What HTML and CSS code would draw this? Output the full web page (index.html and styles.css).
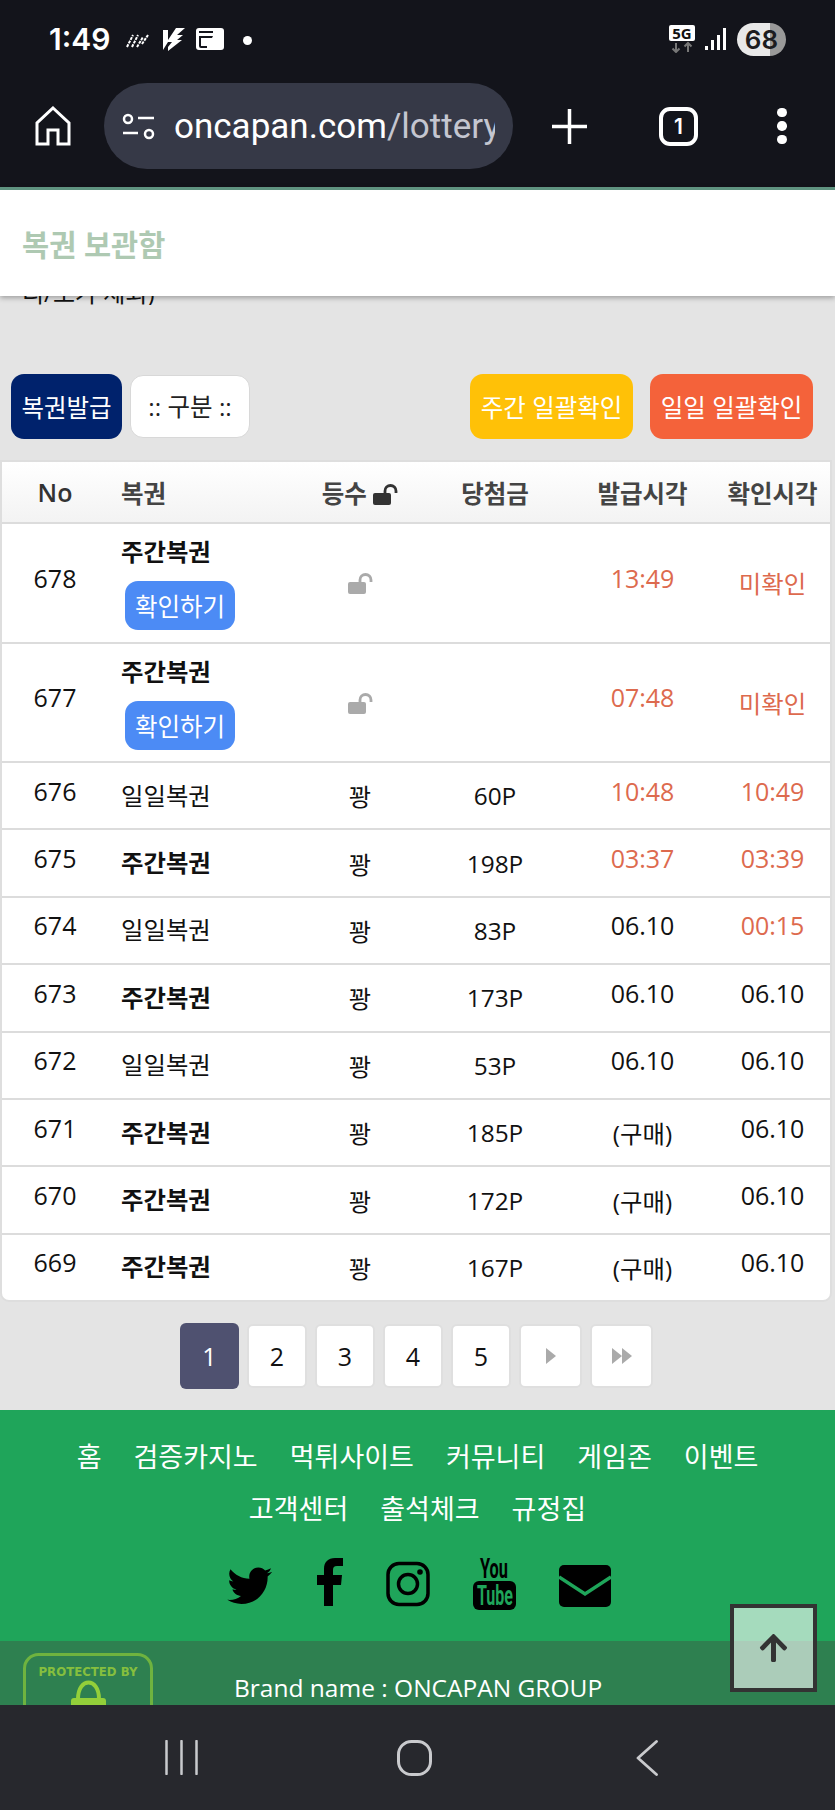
FILE: index.html
```html
<!DOCTYPE html>
<html lang="ko">
  <head>
    <meta charset="utf-8">
    <title>복권 보관함</title>
    <link rel="stylesheet" href="styles.css">
  </head>
  <body>
    <div class="screen">
      <div class="chrome">
        <div class="status">
          <span class="clock">1:49</span>
          <svg class="st-rain" width="24" height="14" viewBox="0 0 24 14"><path d="M1 13L7 1M6 13L12 1M11 13L17 3M16 10L22 1" stroke="#fff" stroke-width="2" stroke-dasharray="3 1" fill="none"/></svg>
          <svg class="st-bolt" width="23" height="23" viewBox="0 0 23 23"><path d="M0 2H5V12L13 0H22L14 7H20L14 12H19L5 23V19L9 14H5L0 22Z" fill="#fff"/></svg>
          <svg class="st-card" width="28" height="22" viewBox="0 0 28 22"><rect width="28" height="22" rx="3" fill="#fff"/><path d="M3 3H17V5H3ZM3 8H17L16 10H5V18H11V20H5Q3 20 3 18Z" fill="#13141b"/></svg>
          <span class="st-dot"></span>
          <div class="status-right">
            <svg width="26" height="28" viewBox="0 0 26 28"><rect width="26" height="16" rx="2" fill="#fff"/><text class="fiveg" x="13" y="13.500" text-anchor="middle">5G</text><path d="M7 18V27M3.500 23.500L7 27L10.500 23.500M19 27V18M15.500 21.500L19 18L22.500 21.500" stroke="#777" stroke-width="2" fill="none"/></svg>
            <svg class="st-signal" width="21" height="22" viewBox="0 0 21 22"><path d="M0 18H3V22H0ZM6 12H9V22H6ZM12 7H15V22H12ZM18 0H21V22H18Z" fill="#fff"/></svg>
            <span class="battery">68</span>
          </div>
        </div>
        <div class="toolbar">
          <svg class="tb-home" width="36" height="40" viewBox="0 0 36 40"><path d="M18 2L34 17V38H23V24H13V38H2V17Z" stroke="#fff" stroke-width="3" fill="none"/></svg>
          <div class="url-pill">
            <svg width="33" height="27" viewBox="0 0 33 27"><circle cx="6" cy="6" r="4" stroke="#fff" stroke-width="2.500" fill="none"/><path d="M16 5H32M1 20H16" stroke="#fff" stroke-width="2.500"/><circle cx="27" cy="21" r="4" stroke="#fff" stroke-width="2.500" fill="none"/></svg>
            <div class="url-text">oncapan.com<span class="url-path">/lottery</span></div>
          </div>
          <svg class="tb-plus" width="35" height="35" viewBox="0 0 35 35"><path d="M0 17.500H35M17.500 0V35" stroke="#fff" stroke-width="3.500"/></svg>
          <div class="tab-count">1</div>
          <div class="menu-dots"><span></span><span></span><span></span></div>
        </div>
      </div>

      <div class="title-bar">복권 보관함</div>

      <div class="scroller">
        <div class="note"><span>리/토가 제외)</span></div>

        <div class="actions">
          <div class="action-group">
            <button class="btn btn-navy">복권발급</button>
            <div class="btn btn-select">:: 구분 ::</div>
          </div>
          <div class="action-group action-right">
            <button class="btn btn-yellow">주간 일괄확인</button>
            <button class="btn btn-orange">일일 일괄확인</button>
          </div>
        </div>

        <table class="lottery">
          <colgroup>
            <col class="c-no"><col class="c-name"><col class="c-rank"><col class="c-prize"><col class="c-issue"><col class="c-check">
          </colgroup>
          <thead>
            <tr>
              <th class="th-no">No</th>
              <th class="left">복권</th>
              <th>등수 <svg class="lock lock-dark" width="25" height="21" viewBox="0 0 25 21"><use href="#unlock"/></svg></th>
              <th>당첨금</th>
              <th>발급시각</th>
              <th>확인시각</th>
            </tr>
          </thead>
          <tbody>
            <tr class="tall">
              <td class="num">678</td>
              <td class="name stack"><strong>주간복권</strong><button class="check-btn">확인하기</button></td>
              <td><svg class="lock lock-grey" width="25" height="21" viewBox="0 0 25 21"><use href="#unlock"/></svg></td>
              <td></td>
              <td class="num red">13:49</td>
              <td class="red">미확인</td>
            </tr>
            <tr class="tall">
              <td class="num">677</td>
              <td class="name stack"><strong>주간복권</strong><button class="check-btn">확인하기</button></td>
              <td><svg class="lock lock-grey" width="25" height="21" viewBox="0 0 25 21"><use href="#unlock"/></svg></td>
              <td></td>
              <td class="num red">07:48</td>
              <td class="red">미확인</td>
            </tr>
            <tr>
              <td class="num">676</td><td class="name">일일복권</td><td>꽝</td><td>60P</td><td class="num red">10:48</td><td class="num red">10:49</td>
            </tr>
            <tr>
              <td class="num">675</td><td class="name"><strong>주간복권</strong></td><td>꽝</td><td>198P</td><td class="num red">03:37</td><td class="num red">03:39</td>
            </tr>
            <tr>
              <td class="num">674</td><td class="name">일일복권</td><td>꽝</td><td>83P</td><td class="num">06.10</td><td class="num red">00:15</td>
            </tr>
            <tr>
              <td class="num">673</td><td class="name"><strong>주간복권</strong></td><td>꽝</td><td>173P</td><td class="num">06.10</td><td class="num">06.10</td>
            </tr>
            <tr>
              <td class="num">672</td><td class="name">일일복권</td><td>꽝</td><td>53P</td><td class="num">06.10</td><td class="num">06.10</td>
            </tr>
            <tr>
              <td class="num">671</td><td class="name"><strong>주간복권</strong></td><td>꽝</td><td>185P</td><td>(구매)</td><td class="num">06.10</td>
            </tr>
            <tr>
              <td class="num">670</td><td class="name"><strong>주간복권</strong></td><td>꽝</td><td>172P</td><td>(구매)</td><td class="num">06.10</td>
            </tr>
            <tr>
              <td class="num">669</td><td class="name"><strong>주간복권</strong></td><td>꽝</td><td>167P</td><td>(구매)</td><td class="num">06.10</td>
            </tr>
          </tbody>
        </table>

        <div class="pager">
          <a class="page current">1</a>
          <a class="page">2</a>
          <a class="page">3</a>
          <a class="page">4</a>
          <a class="page">5</a>
          <a class="page wide"><svg width="10" height="16" viewBox="0 0 10 16"><path d="M0 0L10 8L0 16Z" fill="#aaa"/></svg></a>
          <a class="page wide"><svg width="20" height="16" viewBox="0 0 20 16"><path d="M0 0L10 8L0 16ZM10 0L20 8L10 16Z" fill="#aaa"/></svg></a>
        </div>

        <div class="footer">
          <div class="foot-nav">
            <a>홈</a><a>검증카지노</a><a>먹튀사이트</a><a>커뮤니티</a><a>게임존</a><a>이벤트</a>
            <a>고객센터</a><a>출석체크</a><a>규정집</a>
          </div>
          <div class="social">
            <svg width="50" height="52" viewBox="-38 -60 570 593"><path d="M459.37 151.716c.325 4.548.325 9.097.325 13.645 0 138.72-105.583 298.558-298.558 298.558-59.452 0-114.68-17.219-161.137-47.106 8.447.974 16.568 1.299 25.34 1.299 49.055 0 94.213-16.568 130.274-44.832-46.132-.975-84.792-31.188-98.112-72.772 6.498.974 12.995 1.624 19.818 1.624 9.421 0 18.843-1.3 27.614-3.573-48.081-9.747-84.143-51.98-84.143-102.985v-1.299c13.969 7.797 30.214 12.67 47.431 13.319-28.264-18.843-46.781-51.005-46.781-87.391 0-19.492 5.197-37.36 14.294-52.954 51.655 63.675 129.3 105.258 216.365 109.807-1.624-7.797-2.599-15.918-2.599-24.04 0-57.828 46.782-104.934 104.934-104.934 30.213 0 57.502 12.67 76.67 33.137 23.715-4.548 46.456-13.32 66.599-25.34-7.798 24.366-24.366 44.833-46.132 57.827 21.117-2.273 41.584-8.122 60.426-16.243-14.292 20.791-32.161 39.308-52.628 54.253z"/></svg>
            <svg width="32" height="52" viewBox="0 0 32 52"><path d="M10 48V27H3V17H10V11C10 4 14 0 21 0H29V8H23C20 8 19 9.500 19 12V17H28L27 27H19V48Z"/></svg>
            <svg width="44" height="52" viewBox="0 0 44 52"><rect x="2" y="5.500" width="40" height="41" rx="11" fill="none" stroke="#000" stroke-width="3.500"/><circle cx="22" cy="26" r="9.500" fill="none" stroke="#000" stroke-width="3.500"/><circle cx="34" cy="14" r="2.800"/></svg>
            <svg width="49" height="52" viewBox="0 0 49 52"><text class="yt-you" x="10" y="20" textLength="28" lengthAdjust="spacingAndGlyphs">You</text><rect x="3" y="23" width="43" height="29" rx="6"/><text class="yt-tube" x="7" y="47" textLength="36" lengthAdjust="spacingAndGlyphs">Tube</text></svg>
            <svg width="52" height="52" viewBox="0 0 52 52"><rect y="7" width="52" height="42" rx="5"/><path d="M0 19L26 36L52 19" fill="none" stroke="#1fa55a" stroke-width="3.500"/></svg>
          </div>
        </div>

        <div class="legal">
          <svg class="shield" width="130" height="110" viewBox="0 0 130 110">
            <rect x="1.500" y="1.500" width="127" height="107" rx="14" fill="none" stroke="#6fb33f" stroke-width="3"/>
            <text class="shield-text" x="65" y="23" text-anchor="middle" textLength="99" lengthAdjust="spacingAndGlyphs">PROTECTED BY</text>
            <path d="M55 46C55 24 76 24 76 46" fill="none" stroke="#93cf3a" stroke-width="4"/>
            <rect x="48" y="45" width="35" height="30" rx="3" fill="#93cf3a"/>
          </svg>
          <div class="brand">Brand name : ONCAPAN GROUP</div>
        </div>
      </div>

      <a class="to-top"><svg width="29" height="28" viewBox="0 30 448 450"><path d="M34.9 289.5l-22.2-22.2c-9.4-9.4-9.4-24.6 0-33.9L207 39c9.4-9.4 24.6-9.4 33.9 0l194.3 194.3c9.4 9.4 9.4 24.6 0 33.9L413 289.4c-9.5 9.5-25 9.3-34.3-.4L264 168.6V456c0 13.3-10.7 24-24 24h-32c-13.3 0-24-10.7-24-24V168.6L69.2 289.1c-9.3 9.8-24.8 10-34.3.4z"/></svg></a>

      <div class="navbar">
        <svg width="33" height="35" viewBox="0 0 33 35"><path d="M1.500 1V34M16.500 1V34M31.500 1V34" stroke="#c9cacd" stroke-width="2.500" stroke-linecap="round"/></svg>
        <svg width="35" height="36" viewBox="0 0 35 36"><rect x="1.500" y="1.500" width="32" height="33" rx="13" fill="none" stroke="#c9cacd" stroke-width="3"/></svg>
        <svg width="22" height="36" viewBox="0 0 22 36"><path d="M20.500 1.500L2 18L20.500 34.500" fill="none" stroke="#c9cacd" stroke-width="2.800" stroke-linecap="round" stroke-linejoin="round"/></svg>
      </div>
    </div>

    <svg width="0" height="0" class="defs">
      <symbol id="unlock" viewBox="0 0 25 21">
        <rect y="9" width="18" height="12" rx="2" fill="currentColor"/>
        <path d="M12 10V7A5.500 5.500 0 0 1 23 7V9" fill="none" stroke="currentColor" stroke-width="2.800"/>
      </symbol>
    </svg>
  </body>
</html>
```

FILE: styles.css
```css
* {
  box-sizing: border-box;
}

body {
  margin: 0;
  font-family: "Open Sans", "Noto Sans CJK KR", sans-serif;
  color: #111;
}

.defs {
  position: absolute;
}

.screen {
  position: relative;
  display: flex;
  flex-direction: column;
  width: 835px;
  height: 1810px;
  overflow: hidden;
  background: #e4e4e4;
}

/* phone status bar + browser toolbar */
.chrome {
  flex: none;
  height: 187px;
  background: #13141b;
  color: #fff;
}

.status {
  display: flex;
  align-items: center;
  height: 78px;
  padding: 0 49px;
}

.clock {
  font-family: Inter, sans-serif;
  font-size: 30px;
  font-weight: 600;
  width: 61px;
}

.st-rain {
  margin-left: 16px;
  margin-top: 3px;
}

.st-bolt {
  margin-left: 13px;
}

.st-card {
  margin-left: 10px;
}

.st-dot {
  width: 9px;
  height: 9px;
  margin-left: 19px;
  margin-top: 2px;
  border-radius: 50%;
  background: #fff;
}

.status-right {
  display: flex;
  align-items: center;
  margin-left: auto;
}

.st-signal {
  margin-left: 10px;
  margin-top: 0;
}

.fiveg {
  font-family: "Noto Sans", sans-serif;
  font-size: 15px;
  font-weight: 700;
  fill: #111;
}

.battery {
  width: 49px;
  height: 33px;
  margin-left: 11px;
  border-radius: 17px;
  background: linear-gradient(to right, #e8e8e8 68%, #999 68%);
  color: #1c1c20;
  font-family: Inter, sans-serif;
  font-size: 26px;
  font-weight: 600;
  line-height: 33px;
  text-align: center;
}

.toolbar {
  display: flex;
  align-items: center;
  height: 96px;
  padding-left: 35px;
}

.url-pill {
  display: flex;
  align-items: center;
  width: 409px;
  height: 86px;
  margin-left: 33px;
  padding-left: 18px;
  border-radius: 43px;
  background: #363947;
}

.url-text {
  width: 321px;
  margin-left: 19px;
  overflow: hidden;
  white-space: nowrap;
  font-family: Roboto, sans-serif;
  font-size: 35px;
}

.url-path {
  color: #c4c6d0;
}

.tb-plus {
  margin-left: 39px;
}

.tab-count {
  width: 39px;
  height: 39px;
  margin-left: 72px;
  border: 4px solid #fff;
  border-radius: 11px;
  font-family: Inter, sans-serif;
  font-size: 21px;
  font-weight: 600;
  line-height: 31px;
  text-align: center;
}

.menu-dots {
  display: flex;
  flex-direction: column;
  gap: 4px;
  margin-left: 79px;
}

.menu-dots span {
  width: 9.500px;
  height: 9.500px;
  border-radius: 50%;
  background: #fff;
}

.title-bar {
  position: relative;
  z-index: 2;
  flex: none;
  display: flex;
  align-items: center;
  height: 109px;
  padding-left: 22px;
  border-top: 3px solid #5f9380;
  background: #fff;
  box-shadow: 0 2px 5px rgba(0, 0, 0, 0.3);
  color: #aec9b2;
  font-size: 29.500px;
  font-weight: 700;
}

.scroller {
  flex: 1;
  overflow: hidden;
}

.note {
  display: flex;
  align-items: flex-end;
  height: 9px;
  padding-left: 22px;
  overflow: hidden;
  font-size: 24px;
  line-height: 24px;
}

.actions {
  display: flex;
  justify-content: space-between;
  margin-top: 69px;
  padding: 0 22px 0 11px;
}

.action-group {
  display: flex;
  align-items: center;
  gap: 8px;
}

.action-right {
  gap: 17px;
}

.btn {
  height: 65px;
  padding: 0;
  border: 0;
  border-radius: 13px;
  color: #fff;
  font-family: inherit;
  font-size: 24.500px;
}

.btn-navy {
  width: 111px;
  background: #00226c;
}

.btn-select {
  width: 120px;
  height: 63px;
  border: 1px solid #d8d8d8;
  background: #fff;
  color: #222;
  line-height: 61px;
  text-align: center;
}

.btn-yellow {
  width: 163px;
  background: #ffc107;
}

.btn-orange {
  width: 163px;
  background: #f4623a;
}

/* list table */
.lottery {
  width: 828px;
  margin: 23px 0 0 2px;
  border-collapse: separate;
  border-spacing: 0;
  table-layout: fixed;
  background: #fff;
  font-size: 24.400px;
  border-radius: 0 0 7px 7px;
  box-shadow: 0 0 0 2px #dedede;
}

.c-no { width: 106px; }
.c-name { width: 192px; }
.c-rank { width: 120px; }
.c-prize { width: 150px; }
.c-issue { width: 145px; }
.c-check { width: 115px; }

.lottery th {
  height: 62px;
  padding: 0;
  border-bottom: 2px solid #dcdcdc;
  background: linear-gradient(to bottom, #fff, #f3f3f3);
  color: #444;
  font-size: 24.500px;
  font-weight: 700;
}

.lottery th.th-no {
  color: #333;
  font-size: 25px;
  font-weight: 600;
}

.lottery th.left {
  padding-left: 13px;
  text-align: left;
}

.lottery td {
  height: 67.400px;
  padding: 0;
  border-bottom: 2px solid #dcdcdc;
  text-align: center;
}

.lottery tbody tr:last-child td {
  height: 65.400px;
  border-bottom: 0;
}

.lottery tr.tall td {
  height: 119.500px;
}

.lottery td.num {
  padding-bottom: 10px;
  font-size: 25px;
}

.lottery td.name {
  padding-bottom: 3px;
  padding-left: 13px;
  text-align: left;
}

.lottery td.stack {
  padding-top: 13px;
  padding-bottom: 0;
  vertical-align: top;
}

.stack strong {
  display: block;
  line-height: 30px;
}

.red {
  color: #dd6a4e;
}

.check-btn {
  display: block;
  width: 110px;
  height: 49px;
  margin: 14px 0 0 4px;
  padding: 0;
  border: 0;
  border-radius: 13px;
  background: #4c8bf5;
  color: #fff;
  font-family: inherit;
  font-size: 24.500px;
}

.lock {
  vertical-align: -2px;
}

.lock-dark {
  color: #333;
}

.lock-grey {
  color: #aaa;
}

.pager {
  display: flex;
  align-items: center;
  justify-content: center;
  gap: 8px;
  margin-top: 23px;
  padding-right: 2px;
}

.page {
  display: flex;
  align-items: center;
  justify-content: center;
  width: 60px;
  height: 64px;
  border: 2px solid #dfdfdf;
  border-radius: 6px;
  background: #fff;
  font-size: 25px;
}

.page.current {
  width: 59px;
  height: 66px;
  border: 0;
  background: #4f5170;
  color: #fff;
}

.page.wide {
  width: 63px;
}

/* footer */
.footer {
  margin-top: 21px;
  padding: 21px 0 31px;
  background: #1fa55a;
}

.foot-nav {
  display: flex;
  flex-wrap: wrap;
  justify-content: center;
  column-gap: 32px;
  width: 720px;
  margin: 0 auto;
  color: #fff;
  font-size: 27px;
  line-height: 52px;
}

.social {
  display: flex;
  justify-content: center;
  gap: 40px;
  margin-top: 23px;
}

.yt-you,
.yt-tube {
  font-family: Roboto, sans-serif;
  font-weight: 700;
}

.yt-you {
  font-size: 27px;
}

.yt-tube {
  font-size: 28px;
  fill: #1fa55a;
}

.legal {
  display: flex;
  height: 120px;
  padding: 12px 0 0 23px;
  background: #2e8050;
}

.shield-text {
  font-family: "DejaVu Sans", sans-serif;
  font-size: 13px;
  font-weight: 700;
  fill: #86bf3e;
}

.brand {
  margin: 16px 0 0 81px;
  color: #fff;
  font-size: 24.500px;
  line-height: 38px;
}

.to-top {
  position: absolute;
  left: 730px;
  top: 1604px;
  display: flex;
  align-items: center;
  justify-content: center;
  width: 87px;
  height: 88px;
  border: 4px solid #333;
  background: rgba(255, 255, 255, 0.6);
}

.to-top svg {
  fill: #333;
}

.navbar {
  flex: none;
  display: grid;
  grid-template-columns: repeat(3, 233px);
  justify-content: center;
  justify-items: center;
  align-items: center;
  height: 105px;
  padding-right: 7px;
  background: #27282d;
}
```
